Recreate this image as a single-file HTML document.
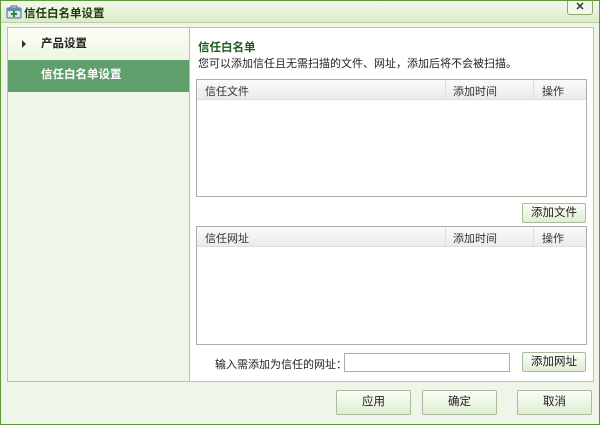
<!DOCTYPE html>
<html><head><meta charset="utf-8"><style>
*{margin:0;padding:0;box-sizing:border-box}
body{width:600px;height:425px;overflow:hidden;font-family:"Liberation Sans","Noto Sans CJK SC",sans-serif;font-size:12px;color:#222;position:relative;background:#eff5e8}
.win{position:absolute;left:0;top:0;width:600px;height:425px;border:1px solid #5e9a3a;background:#eff5e8}
.title{position:absolute;left:0;top:0;width:598px;height:22px;background:linear-gradient(#f4f9ec,#dcebc8);border-bottom:1px solid #b8d0a0}
.title span{position:absolute;left:23px;top:4px;font-weight:bold;font-size:11.5px;color:#1e3a10}
.close{position:absolute;left:566px;top:0;width:26px;height:14px;border:1px solid #8aa870;border-top:none;border-radius:0 0 3px 3px;background:#f2f7ea;font-size:11px;text-align:center;line-height:12px;font-weight:bold;color:#333}
.panel{position:absolute;left:6px;top:26px;width:587px;height:355px;border:1px solid #b8c4b0;background:#fff}
.side{position:absolute;left:0;top:0;width:182px;height:353px;background:#f0f5ea;border-right:1px solid #b8c4b0}
.i1{position:absolute;left:0;top:0;width:181px;height:32px;background:linear-gradient(#fbfdf7,#eef5e2);font-weight:bold;line-height:32px;padding-left:33px;font-size:11.5px}
.i1:before{content:"";position:absolute;left:14px;top:12px;border-left:4px solid #333;border-top:4px solid transparent;border-bottom:4px solid transparent}
.i2{position:absolute;left:0;top:32px;width:181px;height:32px;background:#5f9f6c;color:#fff;font-weight:bold;line-height:31px;padding-left:33px;font-size:11.5px}
.h{position:absolute;left:190px;top:11px;font-weight:bold;color:#1f5a1f;font-size:11.5px}
.d{position:absolute;left:190px;top:27px;font-size:11px}
.tbl{position:absolute;left:188px;width:391px;border:1px solid #a8b0a4;background:#fff}
.th{height:20px;background:linear-gradient(#fafafa,#ebebeb);border-bottom:1px solid #ddd;position:relative;font-size:11px;color:#333}
.th span{position:absolute;top:3px}
.th i{position:absolute;top:0;height:19px;border-left:1px solid #ddd}
.btn{position:absolute;border:1px solid #a8bc98;border-radius:2px;background:linear-gradient(#fbfdf8,#e0edd4);text-align:center;font-size:11.5px;color:#222}
.inp{position:absolute;left:336px;top:325px;width:166px;height:19px;border:1px solid #a8b0a4;background:#fff}
</style></head><body>
<div class="win">
<div class="title">
<svg style="position:absolute;left:5px;top:3px" width="16" height="15" viewBox="0 0 16 15"><rect x="1" y="4" width="14" height="10" rx="1" fill="#d8e4f0" stroke="#4a6a8a"/><path d="M5 4V2h6v2" fill="none" stroke="#4a6a8a"/><rect x="1" y="4" width="14" height="3" fill="#6a8ab0"/><path d="M8 7v6M5 10h6" stroke="#2a8a2a" stroke-width="2"/></svg>
<span>信任白名单设置</span></div>
<div class="close">✕</div>
<div class="panel">
<div class="side"><div class="i1">产品设置</div><div class="i2">信任白名单设置</div></div>
<div class="h">信任白名单</div>
<div class="d">您可以添加信任且无需扫描的文件、网址，添加后将不会被扫描。</div>
<div class="tbl" style="top:51px;height:118px"><div class="th"><span style="left:8px">信任文件</span><i style="left:248px"></i><span style="left:256px">添加时间</span><i style="left:336px"></i><span style="left:345px">操作</span></div></div>
<div class="btn" style="left:514px;top:175px;width:64px;height:20px;line-height:18px">添加文件</div>
<div class="tbl" style="top:198px;height:119px"><div class="th"><span style="left:8px">信任网址</span><i style="left:248px"></i><span style="left:256px">添加时间</span><i style="left:336px"></i><span style="left:345px">操作</span></div></div>
<div style="position:absolute;left:207px;top:328px;font-size:11px">输入需添加为信任的网址：</div>
<div class="inp"></div>
<div class="btn" style="left:514px;top:324px;width:64px;height:20px;line-height:18px">添加网址</div>
</div>
<div class="btn" style="left:335px;top:389px;width:75px;height:25px;line-height:23px">应用</div>
<div class="btn" style="left:421px;top:389px;width:75px;height:25px;line-height:23px">确定</div>
<div class="btn" style="left:516px;top:389px;width:75px;height:25px;line-height:23px">取消</div>
</div>
</body></html>
